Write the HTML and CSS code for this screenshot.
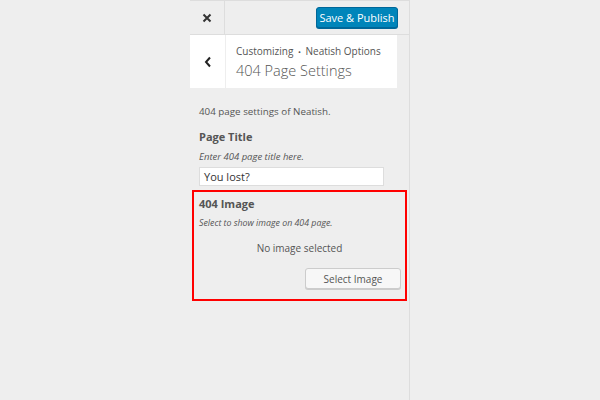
FILE: index.html
```html
<!DOCTYPE html>
<html>
<head>
<meta charset="utf-8">
<link rel="stylesheet" href="styles.css">
</head>
<body>
<div class="sidebar">
  <div class="header">
    <div class="close">
      <svg width="10" height="10" viewBox="0 0 10 10"><path d="M1.5 1.5 L8.5 8.5 M8.5 1.5 L1.5 8.5" stroke="#333" stroke-width="2" fill="none"/></svg>
    </div>
    <div class="spacer"></div>
    <button class="publish">Save &amp; Publish</button>
  </div>
  <div class="panel">
    <div class="back">
      <svg width="8" height="12" viewBox="0 0 8 12"><path d="M6 1.5 L2 6 L6 10.5" stroke="#222" stroke-width="2" fill="none"/></svg>
    </div>
    <div class="titles">
      <div class="crumb">Customizing <span class="dot">&bull;</span> Neatish Options</div>
      <div class="title">404 Page Settings</div>
    </div>
  </div>
  <div class="content">
    <p class="desc">404 page settings of Neatish.</p>
    <div class="field">
      <div class="label">Page Title</div>
      <div class="hint">Enter 404 page title here.</div>
      <div class="input">You lost?</div>
    </div>
  </div>
  <div class="imagebox">
    <div class="label">404 Image</div>
    <div class="hint small">Select to show image on 404 page.</div>
    <div class="noimg">No image selected</div>
    <div class="actions"><button class="select">Select Image</button></div>
  </div>
</div>
</body>
</html>
```
FILE: styles.css
```css
html, body {
  margin: 0;
  padding: 0;
  background: #eeeeee;
  font-family: "Open Sans", "Noto Sans", sans-serif;
  color: #555;
}
.sidebar {
  margin-left: 190px;
  width: 219px;
  height: 400px;
  border-right: 1px solid #dddddd;
  box-sizing: content-box;
}
.header {
  display: flex;
  align-items: center;
  height: 33px;
  border-top: 1px solid #dddddd;
  border-bottom: 1px solid #dddddd;
}
.close {
  width: 35px;
  height: 33px;
  border-right: 1px solid #dddddd;
  box-sizing: border-box;
  display: flex;
  align-items: center;
  justify-content: center;
}
.spacer { flex: 1; }
.publish {
  margin-right: 11px;
  height: 21px;
  width: 82px;
  padding: 0;
  background: #0085ba;
  border: 1px solid #006799;
  border-radius: 3px;
  color: #fff;
  font-family: "Open Sans", sans-serif;
  font-size: 11px;
  font-weight: 400;
  box-shadow: 0 1px 0 #006799;
}
.panel {
  display: flex;
  background: #fff;
  height: 53px;
  margin-right: 12px;
}
.back {
  width: 35px;
  border-right: 1px solid #eeeeee;
  display: flex;
  align-items: center;
  justify-content: center;
}
.titles {
  padding-left: 10px;
  padding-top: 9px;
}
.crumb {
  font-size: 10px;
  color: #555;
  line-height: 14px;
}
.dot { font-size: 8px; margin: 0 2px; }
.title {
  font-size: 14.5px;
  color: #555;
  line-height: 22px;
  font-weight: 300;
  margin-top: 1px;
}
.content {
  padding: 0 9px;
}
.desc {
  margin: 16px 0 0;
  font-size: 9.8px;
  line-height: 16px;
}
.field { margin-top: 9px; }
.label {
  font-size: 11px;
  font-weight: 700;
  color: #555;
  line-height: 16px;
}
.hint {
  font-size: 9.5px;
  font-style: italic;
  line-height: 14px;
  margin-top: 5px;
}
.input {
  margin-top: 3px;
  width: 185px;
  height: 19px;
  box-sizing: border-box;
  background: #fff;
  border: 1px solid #dddddd;
  font-size: 11px;
  line-height: 17px;
  padding-left: 4px;
  color: #333;
}
.imagebox {
  margin: 4px 0 0 2px;
  width: 215px;
  height: 111px;
  box-sizing: border-box;
  border: 2px solid #ff0000;
  padding: 4px 5px 0;
}
.imagebox .hint { margin-top: 4px; }
.hint.small { font-size: 8.8px; }
.noimg {
  text-align: center;
  font-size: 10px;
  line-height: 14px;
  margin-top: 11px;
}
.actions {
  display: flex;
  justify-content: flex-end;
  margin-top: 13px;
}
.select {
  width: 96px;
  height: 21px;
  padding: 0;
  background: #f7f7f7;
  border: 1px solid #cccccc;
  border-radius: 3px;
  box-shadow: 0 1px 0 #ccc;
  font-family: "Open Sans", sans-serif;
  font-size: 10px;
  color: #555;
  margin-right: -1px;
}
```
